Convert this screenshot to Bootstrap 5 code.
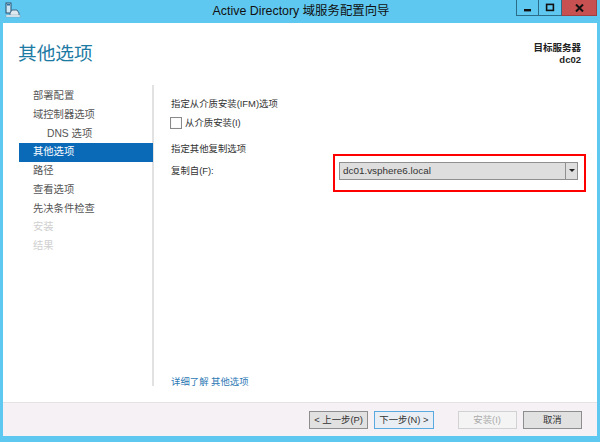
<!DOCTYPE html>
<html lang="zh"><head><meta charset="utf-8"><title>Active Directory 域服务配置向导</title>
<link href="https://cdn.jsdelivr.net/npm/bootstrap@5.3.0/dist/css/bootstrap.min.css" rel="stylesheet">
<style>
html,body{margin:0;height:442px;overflow:hidden}
body{font-family:"Liberation Sans","Noto Sans CJK SC",sans-serif;font-size:10.3px;line-height:14px;color:#333;background:#5fc8f0}
.win{width:600px;height:442px;display:flex;flex-direction:column;padding:0 3px 6px}
.titlebar{height:23px;flex:none;position:relative;text-align:center;font-size:12.4px;line-height:23px;color:#111;padding-left:2px}
.appicon{position:absolute;left:2px;top:2px}
.winbtns{position:absolute;right:0;top:0;display:flex}
.wbtn{height:16px;width:23px;border:1px solid #2b6c88;border-top:0;display:flex;align-items:center;justify-content:center}
.wbtn+.wbtn{border-left:0}
.wbtn.closer{width:35px;background:#c75050;border-color:#a04040}
.client{flex:1;background:#fff;display:flex;flex-direction:column;min-height:0;position:relative}
.headrow{height:62px;flex:none;padding:19px 16px 0 16px}
.pagetitle{font-size:18.7px;line-height:24px;color:#1c7aa3;margin-left:-1px}
.target{font-size:9.5px;line-height:12px;color:#222;font-weight:700;padding-top:0;text-align:right}
.mainrow{flex:1;min-height:0;display:flex;padding-bottom:16px}
.steps{width:135px;margin-left:16px;flex:none;border-right:2px solid #e2e2e2;padding-top:2px}
.stepitem{height:18.75px;line-height:18.75px;padding-left:14px;color:#555}
.stepitem.sub{padding-left:28px}
.stepitem.on{background:#0a6ab8;color:#fff;margin-right:-1px}
.stepitem.off{color:#cfcfcf}
.pane{flex:1;display:flex;flex-direction:column;padding:12px 0 0 17px;color:#333;position:relative;font-size:9.4px}
.secthead{height:14px}
.chkrow{display:flex;align-items:center;gap:3px;height:14px;margin-top:5px;margin-bottom:12px;margin-left:-1px}
.chkbox{width:12px;height:12px;border:1px solid #8a8a8a;background:#fff;box-shadow:inset 0 0 1px #ccc}
.fromrow{display:flex;align-items:center;height:17px;margin-top:6px}
.fromlabel{width:168px}
.combo{width:239px;height:18px;border:1px solid #8f8f8f;background:#dedede;display:flex;color:#333;font-size:9.9px;line-height:16px}
.combotext{flex:1;padding-left:3px}
.comboarrow{width:12px;border-left:1px solid #8f8f8f;display:flex;align-items:center;justify-content:center}
.tri{width:0;height:0;border-left:3px solid transparent;border-right:3px solid transparent;border-top:3px solid #222}
.redbox{position:absolute;left:179px;top:69px;width:253px;height:38px;border:2px solid #f00;pointer-events:none}
.morelink{margin-top:auto;margin-bottom:-3px;color:#2c79b5;text-decoration:none}
.footbar{height:34px;flex:none;background:#f5f1f4;border-top:1px solid #e4e4e4;display:flex;align-items:center;padding:0 15px 0 306px;gap:6px}
.wizbtn{width:60px;height:18px;padding:0;font-size:9.4px;line-height:16px;border:1px solid #8e8e8e;border-radius:0;background:#e1e1e1;color:#333;text-align:center}
.wizbtn.focusd{border-color:#5ca8e0;background:#e8eef4}
.wizbtn.disab{border-color:#d2d2d2;background:#f4f4f4;color:#aaa;opacity:1}
.spacer24{margin-left:18px}
</style></head>
<body>
<div class="win">
  <div class="titlebar">
    <svg class="appicon" width="16" height="16" viewBox="0 0 16 16"><rect x="1" y="1" width="5" height="10" fill="#cfe6f4" stroke="#24506e"/><rect x="2" y="2" width="3" height="1.5" fill="#2b6fa0"/><path d="M5 11l2-3h5l2 3v3H5z" fill="#dfe8ee" stroke="#3d6a88"/><rect x="1" y="13" width="14" height="2" fill="#eef4f8" stroke="#7aa0b8" stroke-width=".5"/></svg>
    Active Directory 域服务配置向导
    <div class="winbtns">
      <div class="wbtn"><svg width="9" height="8" viewBox="0 0 9 8"><rect x="1" y="5" width="7" height="2.4" fill="#111"/></svg></div>
      <div class="wbtn"><svg width="10" height="9" viewBox="0 0 10 9"><rect x="1.6" y="1.4" width="6.8" height="6" fill="none" stroke="#111" stroke-width="1.6"/></svg></div>
      <div class="wbtn closer"><svg width="9" height="8" viewBox="0 0 9 8"><path d="M1 .5l7 7M8 .5l-7 7" stroke="#111" stroke-width="2"/></svg></div>
    </div>
  </div>
  <div class="client">
    <div class="headrow d-flex justify-content-between align-items-start">
      <div class="pagetitle">其他选项</div>
      <div class="target">目标服务器<br>dc02</div>
    </div>
    <div class="mainrow">
      <div class="steps">
        <div class="stepitem">部署配置</div>
        <div class="stepitem">域控制器选项</div>
        <div class="stepitem sub">DNS 选项</div>
        <div class="stepitem on">其他选项</div>
        <div class="stepitem">路径</div>
        <div class="stepitem">查看选项</div>
        <div class="stepitem">先决条件检查</div>
        <div class="stepitem off">安装</div>
        <div class="stepitem off">结果</div>
      </div>
      <div class="pane">
        <div class="secthead">指定从介质安装(IFM)选项</div>
        <div class="chkrow"><span class="chkbox"></span><span>从介质安装(I)</span></div>
        <div class="secthead">指定其他复制选项</div>
        <div class="fromrow">
          <div class="fromlabel">复制自(F):</div>
          <div class="combo"><div class="combotext">dc01.vsphere6.local</div><div class="comboarrow"><span class="tri"></span></div></div>
        </div>
        <div class="redbox"></div>
        <a class="morelink" href="#">详细了解 其他选项</a>
      </div>
    </div>
    <div class="footbar">
      <button class="btn wizbtn">&lt; 上一步(P)</button>
      <button class="btn wizbtn focusd">下一步(N) &gt;</button>
      <button class="btn wizbtn disab spacer24" disabled>安装(I)</button>
      <button class="btn wizbtn">取消</button>
    </div>
  </div>
</div>
<script src="https://cdn.jsdelivr.net/npm/bootstrap@5.3.0/dist/js/bootstrap.bundle.min.js"></script>
</body></html>
